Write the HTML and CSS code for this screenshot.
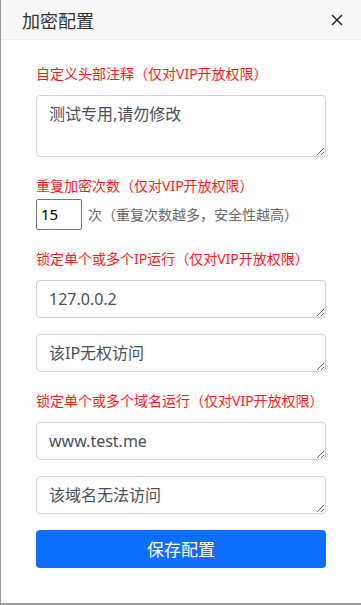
FILE: index.html
```html
<!DOCTYPE html>
<html lang="zh-CN">
<head>
<meta charset="utf-8">
<title>加密配置</title>
<link rel="stylesheet" href="styles.css">
</head>
<body>
<div class="modal">
  <div class="modal-header">
    <span class="modal-title">加密配置</span>
    <svg class="close" width="12" height="12" viewBox="0 0 12 12"><path d="M1 1 L11 11 M11 1 L1 11" stroke="#2b2b2b" stroke-width="1.6" fill="none"/></svg>
  </div>
  <div class="modal-body">
    <div class="group">
      <div class="label">自定义头部注释（仅对VIP开放权限）</div>
      <textarea class="field" rows="2">测试专用,请勿修改</textarea>
    </div>
    <div class="group">
      <div class="label tight">重复加密次数（仅对VIP开放权限）</div>
      <div class="count-row">
        <input class="count" type="text" value="15">
        <span class="hint">次（重复次数越多，安全性越高）</span>
      </div>
    </div>
    <div class="group">
      <div class="label">锁定单个或多个IP运行（仅对VIP开放权限）</div>
      <textarea class="field" rows="1">127.0.0.2</textarea>
      <textarea class="field" rows="1">该IP无权访问</textarea>
    </div>
    <div class="group">
      <div class="label">锁定单个或多个域名运行（仅对VIP开放权限）</div>
      <textarea class="field" rows="1">www.test.me</textarea>
      <textarea class="field" rows="1">该域名无法访问</textarea>
    </div>
    <button class="save" type="button">保存配置</button>
  </div>
</div>
</body>
</html>
```
FILE: styles.css
```css
html, body {
  margin: 0;
  padding: 0;
}
body {
  width: 361px;
  height: 605px;
  overflow: hidden;
  background: #9a9a9a;
  font-family: "Noto Sans", "Noto Sans CJK SC", sans-serif;
}
.modal {
  margin-left: 1px;
  width: 360px;
  height: 603px;
  background: #fff;
  display: flex;
  flex-direction: column;
}
.modal-header {
  height: 39px;
  flex: none;
  background: #f8f8f8;
  border-bottom: 1px solid #eeeeee;
  display: flex;
  align-items: center;
  justify-content: space-between;
  padding: 0 18px 0 21px;
}
.modal-title {
  font-size: 18px;
  color: #333;
  font-family: "Noto Sans CJK SC", sans-serif;
}
.close {
  display: block;
}
.modal-body {
  padding: 23px 35px 0 35px;
  display: flex;
  flex-direction: column;
}
.group {
  display: flex;
  flex-direction: column;
  gap: 16px;
  margin-bottom: 18.5px;
}
.label {
  font-size: 14px;
  line-height: 21px;
  color: #ff1a1a;
  margin-bottom: -5.5px;
}
.label.tight {
  margin-bottom: -13.5px;
}
.field {
  display: block;
  box-sizing: border-box;
  width: 290px;
  margin: 0;
  padding: 6px 12px;
  font-family: "Noto Sans", "Noto Sans CJK SC", sans-serif;
  font-size: 16px;
  line-height: 24px;
  color: #495057;
  border: 1px solid #ced4da;
  border-radius: 4px;
  background: #fff;
  outline: none;
}
textarea.field[rows="2"] { height: 62px; }
textarea.field[rows="1"] { height: 38px; }
.count-row {
  display: flex;
  align-items: center;
  gap: 6px;
}
.count {
  box-sizing: border-box;
  width: 46px;
  height: 31px;
  margin: 0;
  padding: 0 4px;
  border: 1px solid #767676;
  border-radius: 2px;
  font-family: "Noto Sans", sans-serif;
  font-size: 15px;
  color: #000;
  outline: none;
}
.hint {
  font-size: 14px;
  color: #666;
}
.save {
  display: block;
  width: 290px;
  height: 38px;
  margin: -2.5px 0 0 0;
  border: none;
  border-radius: 4px;
  background: #0d6efd;
  color: #fff;
  font-family: "Noto Sans CJK SC", sans-serif;
  font-size: 17px;
}
```
